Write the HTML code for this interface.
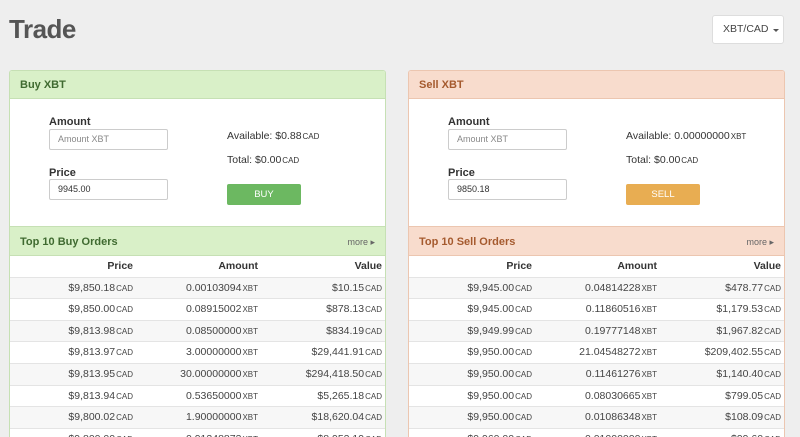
<!DOCTYPE html>
<html><head><style>
*{margin:0;padding:0;box-sizing:border-box}
html,body{width:800px;height:437px;overflow:hidden}
body{background:#eeeeee;font-family:"Liberation Sans",sans-serif;color:#333;position:relative}
h1{position:absolute;left:9px;top:14px;font-size:26px;font-weight:bold;color:#555;letter-spacing:-0.5px}
.dd{position:absolute;left:712px;top:15px;width:72px;height:29px;background:#fff;border:1px solid #ddd;border-radius:3px;font-size:10.5px;color:#444;line-height:27px;padding-left:10px}
.dd:after{content:"";position:absolute;left:60px;top:13px;border-left:3px solid transparent;border-right:3px solid transparent;border-top:3px solid #555}
.panel{position:absolute;top:70px;width:377px;height:380px;background:#fff;border:1px solid;border-radius:3px;overflow:hidden}
.ph{position:absolute;left:0;right:0;height:28px;font-size:11px;font-weight:bold;padding-left:10px;line-height:28px}
.lbl{position:absolute;font-size:11px;font-weight:bold;color:#333}
.inp{position:absolute;width:119px;height:21px;border:1px solid #ccc;font-size:9px;line-height:19px;padding-left:8px;color:#333;border-radius:2px}
.txt{position:absolute;font-size:10.5px;color:#333}
small{font-size:8px;margin-left:1px}
.btn{position:absolute;width:74px;height:21px;border-radius:2px;color:#fff;font-size:9.5px;text-align:center;line-height:21px}
.more{position:absolute;right:10px;font-size:9px;color:#666;font-weight:normal}
.row{position:absolute;left:0;right:0;height:21.6px;border-top:1px solid #e4e4e4;font-size:10.5px;line-height:21px;color:#444}
.row.s{background:#f7f7f7}
.row span{position:absolute;text-align:right;white-space:nowrap}
.c1{right:252px}.c2{right:127px}.c3{right:3px}
.hd{font-weight:bold;font-size:10.5px;color:#333}
</style></head><body>
<h1>Trade</h1>
<div class="dd">XBT/CAD</div>

<div class="panel" style="left:9px;border-color:#c6e0b4">
 <div class="ph" style="top:0;background:#d9f0c8;color:#3f6a30;border-bottom:1px solid #c6e0b4">Buy XBT</div>
 <div class="lbl" style="left:39px;top:45px">Amount</div>
 <div class="inp" style="left:39px;top:58px;color:#888">Amount XBT</div>
 <div class="lbl" style="left:39px;top:96px">Price</div>
 <div class="inp" style="left:39px;top:108px">9945.00</div>
 <div class="txt" style="left:217px;top:59px">Available: $0.88<small>CAD</small></div>
 <div class="txt" style="left:217px;top:83px">Total: $0.00<small>CAD</small></div>
 <div class="btn" style="left:217px;top:113px;background:#6cb861">BUY</div>
 <div class="ph" style="top:155px;height:30px;line-height:30px;background:#d9f0c8;color:#3f6a30;border-top:1px solid #c6e0b4;border-bottom:1px solid #c6e0b4">Top 10 Buy Orders<span class="more">more ▸</span></div>
 <div class="row" style="top:185px;border-top:none"><span class="c1 hd">Price</span><span class="c2 hd">Amount</span><span class="c3 hd">Value</span></div>
 <div class="row s" style="top:205.6px"><span class="c1">$9,850.18<small>CAD</small></span><span class="c2">0.00103094<small>XBT</small></span><span class="c3">$10.15<small>CAD</small></span></div>
 <div class="row" style="top:227.2px"><span class="c1">$9,850.00<small>CAD</small></span><span class="c2">0.08915002<small>XBT</small></span><span class="c3">$878.13<small>CAD</small></span></div>
 <div class="row s" style="top:248.8px"><span class="c1">$9,813.98<small>CAD</small></span><span class="c2">0.08500000<small>XBT</small></span><span class="c3">$834.19<small>CAD</small></span></div>
 <div class="row" style="top:270.4px"><span class="c1">$9,813.97<small>CAD</small></span><span class="c2">3.00000000<small>XBT</small></span><span class="c3">$29,441.91<small>CAD</small></span></div>
 <div class="row s" style="top:292px"><span class="c1">$9,813.95<small>CAD</small></span><span class="c2">30.00000000<small>XBT</small></span><span class="c3">$294,418.50<small>CAD</small></span></div>
 <div class="row" style="top:313.6px"><span class="c1">$9,813.94<small>CAD</small></span><span class="c2">0.53650000<small>XBT</small></span><span class="c3">$5,265.18<small>CAD</small></span></div>
 <div class="row s" style="top:335.2px"><span class="c1">$9,800.02<small>CAD</small></span><span class="c2">1.90000000<small>XBT</small></span><span class="c3">$18,620.04<small>CAD</small></span></div>
 <div class="row" style="top:356.8px"><span class="c1">$9,800.00<small>CAD</small></span><span class="c2">0.91348873<small>XBT</small></span><span class="c3">$8,952.19<small>CAD</small></span></div>
</div>

<div class="panel" style="left:408px;border-color:#ecc6b0">
 <div class="ph" style="top:0;background:#f8dccd;color:#a55a2e;border-bottom:1px solid #ecc6b0">Sell XBT</div>
 <div class="lbl" style="left:39px;top:45px">Amount</div>
 <div class="inp" style="left:39px;top:58px;color:#888">Amount XBT</div>
 <div class="lbl" style="left:39px;top:96px">Price</div>
 <div class="inp" style="left:39px;top:108px">9850.18</div>
 <div class="txt" style="left:217px;top:59px">Available: 0.00000000<small>XBT</small></div>
 <div class="txt" style="left:217px;top:83px">Total: $0.00<small>CAD</small></div>
 <div class="btn" style="left:217px;top:113px;background:#e8ad52">SELL</div>
 <div class="ph" style="top:155px;height:30px;line-height:30px;background:#f8dccd;color:#a55a2e;border-top:1px solid #ecc6b0;border-bottom:1px solid #ecc6b0">Top 10 Sell Orders<span class="more">more ▸</span></div>
 <div class="row" style="top:185px;border-top:none"><span class="c1 hd">Price</span><span class="c2 hd">Amount</span><span class="c3 hd">Value</span></div>
 <div class="row s" style="top:205.6px"><span class="c1">$9,945.00<small>CAD</small></span><span class="c2">0.04814228<small>XBT</small></span><span class="c3">$478.77<small>CAD</small></span></div>
 <div class="row" style="top:227.2px"><span class="c1">$9,945.00<small>CAD</small></span><span class="c2">0.11860516<small>XBT</small></span><span class="c3">$1,179.53<small>CAD</small></span></div>
 <div class="row s" style="top:248.8px"><span class="c1">$9,949.99<small>CAD</small></span><span class="c2">0.19777148<small>XBT</small></span><span class="c3">$1,967.82<small>CAD</small></span></div>
 <div class="row" style="top:270.4px"><span class="c1">$9,950.00<small>CAD</small></span><span class="c2">21.04548272<small>XBT</small></span><span class="c3">$209,402.55<small>CAD</small></span></div>
 <div class="row s" style="top:292px"><span class="c1">$9,950.00<small>CAD</small></span><span class="c2">0.11461276<small>XBT</small></span><span class="c3">$1,140.40<small>CAD</small></span></div>
 <div class="row" style="top:313.6px"><span class="c1">$9,950.00<small>CAD</small></span><span class="c2">0.08030665<small>XBT</small></span><span class="c3">$799.05<small>CAD</small></span></div>
 <div class="row s" style="top:335.2px"><span class="c1">$9,950.00<small>CAD</small></span><span class="c2">0.01086348<small>XBT</small></span><span class="c3">$108.09<small>CAD</small></span></div>
 <div class="row" style="top:356.8px"><span class="c1">$9,960.00<small>CAD</small></span><span class="c2">0.01000000<small>XBT</small></span><span class="c3">$99.60<small>CAD</small></span></div>
</div>
</body></html>
